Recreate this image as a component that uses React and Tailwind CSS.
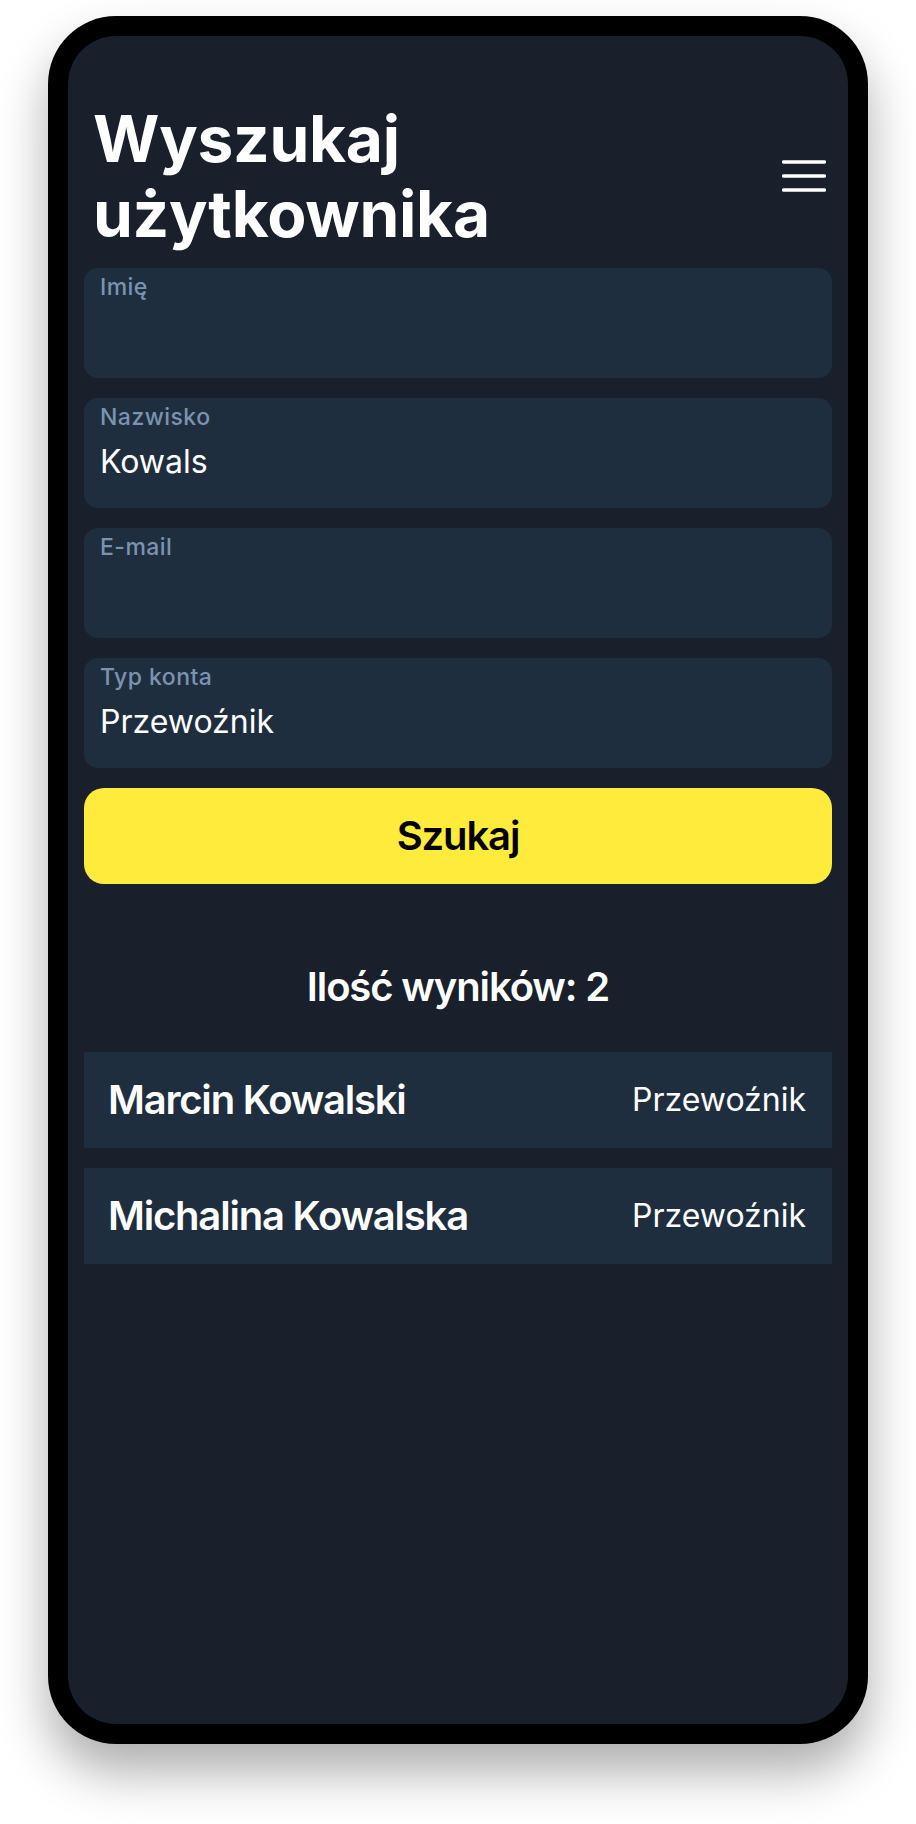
import React from 'react';

const fields = [
  { label: 'Imię', value: '' },
  { label: 'Nazwisko', value: 'Kowals' },
  { label: 'E-mail', value: '' },
  { label: 'Typ konta', value: 'Przewoźnik' },
];

const results = [
  { name: 'Marcin Kowalski', role: 'Przewoźnik' },
  { name: 'Michalina Kowalska', role: 'Przewoźnik' },
];

const MenuIcon = () => (
  <svg width="44" height="32" viewBox="0 0 44 32" fill="none">
    <path d="M1.5 2h41M1.5 16h41M1.5 30h41" stroke="white" strokeWidth="3.5" strokeLinecap="round" />
  </svg>
);

const Field = ({ label, value }) => (
  <div className="h-[110px] rounded-[14px] bg-[#1f2e3f] px-4 pt-[6px]">
    <div className="text-[23px] leading-[27px] font-medium tracking-[0.02em] text-[#7b93b0]">{label}</div>
    <div className="mt-[11px] text-[32px] leading-[40px] text-white">{value}</div>
  </div>
);

const App = () => {
  return (
    <div className="min-h-screen bg-white pt-4 font-['Inter',sans-serif]">
      <div className="mx-auto w-[820px] h-[1728px] bg-black rounded-[68px] p-[20px] shadow-[0_28px_50px_rgba(0,0,0,0.32)]">
        <div className="h-full rounded-[48px] bg-[#19202b] pt-[65px] overflow-hidden">
          <header className="flex items-center justify-between pl-[25px] pr-[22px]">
            <h1 className="text-[64px] leading-[75px] font-bold tracking-[-0.004em] text-white">
              Wyszukaj
              <br />
              użytkownika
            </h1>
            <button className="p-0">
              <MenuIcon />
            </button>
          </header>

          <div className="mt-[17px] px-4">
            <div className="flex flex-col gap-5">
              {fields.map(f => (
                <Field key={f.label} label={f.label} value={f.value} />
              ))}
              <button className="h-[96px] rounded-[20px] bg-[#ffeb3b] text-[40px] font-semibold tracking-[-0.028em] text-black">
                Szukaj
              </button>
            </div>

            <h2 className="mt-[79px] text-center text-[40px] leading-[48px] font-semibold tracking-[-0.028em] text-white">
              Ilość wyników: 2
            </h2>

            <ul className="mt-[41px] flex flex-col gap-5">
              {results.map(r => (
                <li key={r.name} className="h-[96px] bg-[#1f2e3f] flex items-center justify-between pl-[24px] pr-[26px]">
                  <span className="text-[40px] font-semibold tracking-[-0.03em] text-white">{r.name}</span>
                  <span className="text-[32px] text-white">{r.role}</span>
                </li>
              ))}
            </ul>
          </div>
        </div>
      </div>
    </div>
  );
};

export default App;
